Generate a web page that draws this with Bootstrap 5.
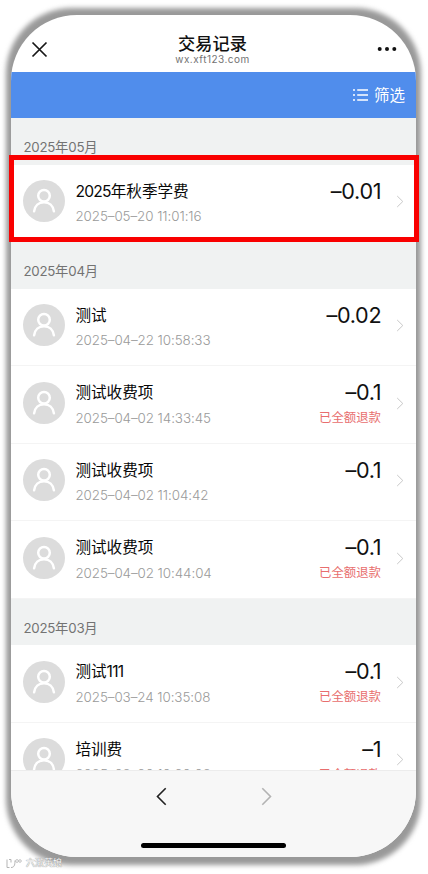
<!DOCTYPE html>
<html lang="zh-CN">
<head>
<meta charset="utf-8">
<meta name="viewport" content="width=device-width, initial-scale=1">
<title>交易记录</title>
<link href="https://cdn.jsdelivr.net/npm/bootstrap@5.3.0/dist/css/bootstrap.min.css" rel="stylesheet">
<style>
body{width:428px;height:874px;font-family:Inter,"Noto Sans CJK SC",sans-serif;color:#111;line-height:1}
.stage{height:874px;padding:15px 12px 17px 11px}
.shade{inset:8px 7px 9px 6px;border-radius:66px;background:#999;filter:blur(2.6px)}
.phone{border-radius:66px;background:#fff}
.top-title{height:57px;padding:0 19px 0 20px}
.close-icon,.more-icon{margin-top:11px}
.heading{font-size:17.2px;font-weight:500;line-height:20px;margin-top:11px}
.host{font-size:10px;letter-spacing:.48px;color:#737373;line-height:11px}
.filter-bar{height:46px;background:#508dec;color:#fff;font-size:15.5px;padding-right:11px;gap:6px}
.filter-bar span{padding-top:1px}
.month{height:46.6px;background:#f0f2f2;color:#737373;font-size:13.3px;padding:22px 12.5px 0;line-height:14px}
.month .n{letter-spacing:-.3px}
.entry{height:77.5px;padding:15px 12px 0 12.4px;border-bottom:1px solid #f4f4f4}
.avatar{width:42px;height:42px;margin-top:.6px}
.info{margin-left:10px}
.name{font-size:15.6px;line-height:22px;color:#080808;white-space:nowrap;padding-top:1px}
.name .n{letter-spacing:-.75px}
.date{font-size:13.4px;line-height:16px;color:#9a9a9a;margin-top:5.5px;letter-spacing:-.07px;font-weight:300;white-space:nowrap}
.amount{font-size:21.6px;line-height:22px;letter-spacing:-.3px;margin-right:-.3px}
.state{font-size:12.4px;line-height:14px;color:#e86e6e;margin-top:8px}
.go{width:8px;height:13px;margin:15.5px 0 0 15px}
.bottom{height:87px;background:#f7f7f7;border-top:1px solid #ececec}
.nav-arrows{height:50px;gap:94px}
.home{width:145px;height:5px;background:#000;margin-top:22px}
.marker{left:9px;top:155px;width:410px;height:87px;border:5px solid #f90000}
.watermark{left:6px;top:857px;font-size:9px;line-height:12px;color:#f8f8f8;text-shadow:0 0 1px #888,0 0 1px #999}
</style>
<script src="https://cdn.jsdelivr.net/npm/bootstrap@5.3.0/dist/js/bootstrap.bundle.min.js"></script>
</head>
<body class="bg-white overflow-hidden">
<svg class="d-none">
 <symbol id="person" viewBox="0 0 42 42"><circle cx="21" cy="21" r="21" fill="#dcdcdc"/><g fill="none" stroke="#fff" stroke-width="2.5" stroke-linecap="round"><circle cx="21" cy="15.8" r="5.8"/><path d="M11.1 31.3C11.8 25.5 15.8 22.2 21 22.2s9.2 3.3 9.9 9.1"/></g></symbol>
 <symbol id="next" viewBox="0 0 8 13"><path d="M1.2 1l5.6 5.5L1.2 12" fill="none" stroke="#c8c8c8" stroke-width="1"/></symbol>
</svg>
<div class="stage position-relative">
 <div class="shade position-absolute"></div>
 <main class="phone position-relative h-100 overflow-hidden d-flex flex-column">
  <header class="top-title d-flex align-items-center justify-content-between flex-shrink-0">
   <svg width="17" height="17" viewBox="0 0 17 17" class="close-icon"><path d="M1.5 1.5l14 14M15.5 1.5l-14 14" stroke="#171717" stroke-width="1.7"/></svg>
   <div class="text-center"><div class="heading">交易记录</div><div class="host">wx.xft123.com</div></div>
   <svg width="20" height="6" viewBox="0 0 20 6" class="more-icon"><g fill="#111"><circle cx="2.7" cy="3" r="2"/><circle cx="10" cy="3" r="2"/><circle cx="17.3" cy="3" r="2"/></g></svg>
  </header>
  <div class="filter-bar d-flex align-items-center justify-content-end flex-shrink-0">
   <svg width="15" height="12" viewBox="0 0 15 12"><path d="M0 1h2M4.2 1H15M0 6h2M4.2 6H15M0 11h2M4.2 11H15" stroke="#fff" stroke-width="1.6"/></svg><span>筛选</span>
  </div>
  <div class="flex-grow-1 overflow-hidden" id="records"></div>
  <footer class="bottom flex-shrink-0">
   <div class="nav-arrows d-flex justify-content-center align-items-center">
    <svg width="11" height="19" viewBox="0 0 11 19"><path d="M9.7 1.2L1.5 9.5l8.2 8.3" fill="none" stroke="#222" stroke-width="1.6"/></svg>
    <svg width="11" height="19" viewBox="0 0 11 19"><path d="M1.3 1.2l8.2 8.3-8.2 8.3" fill="none" stroke="#b3b3b3" stroke-width="1.6"/></svg>
   </div>
   <div class="home rounded-pill mx-auto"></div>
  </footer>
 </main>
 <div class="marker position-absolute"></div>
 <div class="watermark position-absolute d-flex align-items-center">
  <svg width="16" height="11" viewBox="0 0 16 11" class="me-1"><path d="M1 1.5v8h2.5M3 1.5h2v3M5 9.5c3 0 4-2 4-7" fill="none" stroke="#b5b5b5" stroke-width="1"/><circle cx="11" cy="3" r="1.4" fill="none" stroke="#b5b5b5" stroke-width=".8"/><circle cx="14" cy="3" r="1.3" fill="none" stroke="#b5b5b5" stroke-width=".8"/></svg><span>六漱英娘</span>
 </div>
</div>
<script>
const groups=[
 ['05',[['2025年秋季学费','2025–05–20 11:01:16','–0.01',0]]],
 ['04',[['测试','2025–04–22 10:58:33','–0.02',0],['测试收费项','2025–04–02 14:33:45','–0.1',1],['测试收费项','2025–04–02 11:04:42','–0.1',0],['测试收费项','2025–04–02 10:44:04','–0.1',1]]],
 ['03',[['测试111','2025–03–24 10:35:08','–0.1',1],['培训费','2025–03–20 10:20:08','–1',1]]]
];
const digits=s=>s.replace(/\d+/g,'<span class="n">$&</span>');
document.getElementById('records').innerHTML=groups.map(([m,rows])=>
 `<div class="month">${digits('2025年'+m+'月')}</div>`+rows.map(r=>`<div class="entry d-flex align-items-start"><svg class="avatar flex-shrink-0"><use href="#person"/></svg><div class="info flex-grow-1"><div class="name">${digits(r[0])}</div><div class="date">${r[1]}</div></div><div class="text-end"><div class="amount">${r[2]}</div>${r[3]?'<div class="state">已全额退款</div>':''}</div><svg class="go flex-shrink-0"><use href="#next"/></svg></div>`).join('')).join('');
</script>
</body>
</html>
